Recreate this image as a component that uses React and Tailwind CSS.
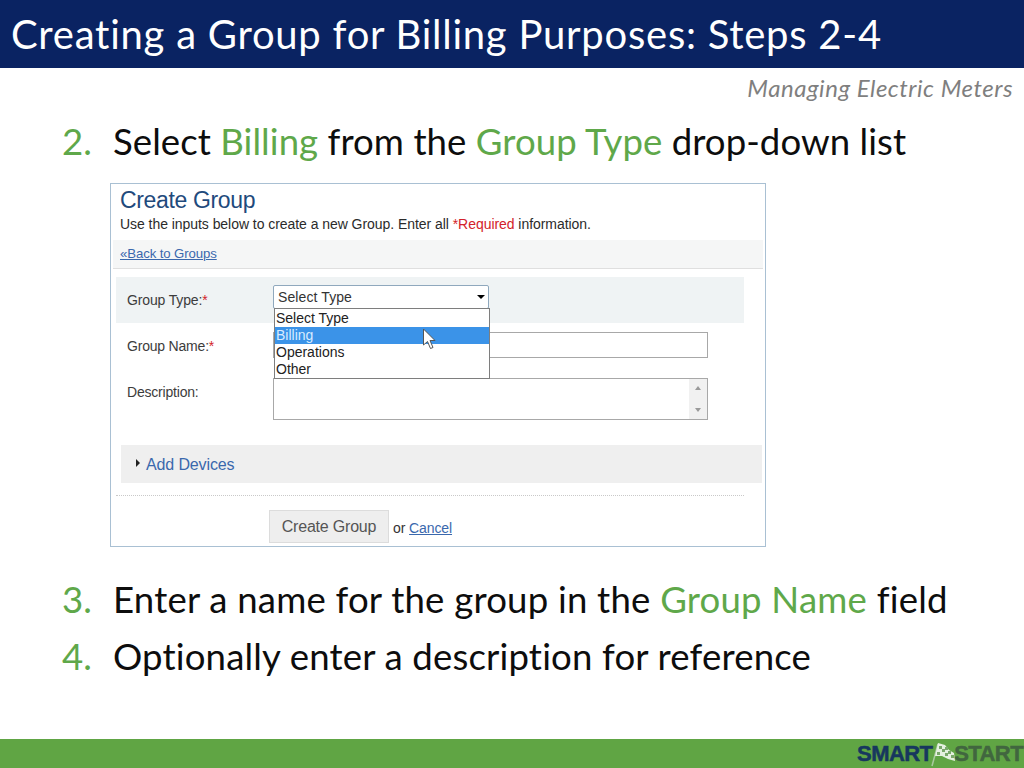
const sans = "font-['Liberation_Sans',Arial,sans-serif]";

function Step({ n, children, className = "" }) {
  return (
    <div className={`flex items-baseline text-[36.6px] leading-[44px] text-[#0d0d0d] ${className}`}>
      <span className="w-[51px] shrink-0 text-[#5fa84a] tracking-normal">{n}.</span>
      <span className="whitespace-nowrap">{children}</span>
    </div>
  );
}

const G = ({ children }) => <span className="text-[#5fa84a]">{children}</span>;
const Req = () => <span className="text-[#d3222a]">*</span>;

function Panel() {
  return (
    <div className={`${sans} ml-[110px] mt-[20px] h-[364px] w-[656px] border border-[#a9c0d3] bg-white flex flex-col`}>
      <div className="h-[56px] px-[9px] pt-[3px] shrink-0">
        <div className="text-[23px] leading-[27px] tracking-[-0.35px] text-[#1f4a7c]">Create Group</div>
        <div className="text-[14px] leading-[18px] tracking-[-0.05px] text-[#2b2b2b] mt-[1px]">
          Use the inputs below to create a new Group. Enter all <span className="text-[#d3222a]">*Required</span> information.
        </div>
      </div>
      <div className="h-[29px] shrink-0 mx-[2px] bg-[#f5f6f6] border-b border-[#dfdfdf] px-[7px] flex items-center text-[13.2px] tracking-[-0.1px] text-[#3a68ad] underline">
        «Back to Groups
      </div>
      <div className="relative flex-1 flex flex-col">
        <div className="mt-[8px] mx-[5px] h-[46px] w-[628px] shrink-0 bg-[#eff3f4] flex items-start pl-[11px] text-[14px] text-[#3c3c3c]">
          <div className="w-[146px] pt-[13px] tracking-[-0.15px]">Group Type:<Req /></div>
          <div className="mt-[8px] h-[24px] w-[216px] border border-[#8fa8bd] rounded-[2px] bg-white flex items-center justify-between pl-[4px] pr-[3px] text-[#333] tracking-[0.1px]">
            <span>Select Type</span>
            <span className="w-0 h-0 border-x-[4px] border-x-transparent border-t-[4px] border-t-black" />
          </div>
        </div>
        <div className="mx-[5px] pl-[11px] h-[46px] shrink-0 flex items-start text-[14px] text-[#3c3c3c]">
          <div className="w-[146px] pt-[13px] tracking-[-0.2px]">Group Name:<Req /></div>
          <div className="mt-[9px] h-[26px] w-[435px] border border-[#a8a8a8] bg-white" />
        </div>
        <div className="mx-[5px] pl-[11px] h-[56px] shrink-0 flex items-start text-[14px] text-[#3c3c3c]">
          <div className="w-[146px] pt-[13px] tracking-[-0.2px]">Description:</div>
          <div className="mt-[9px] h-[42px] w-[435px] border border-[#a8a8a8] bg-white flex justify-end">
            <div className="w-[18px] bg-[#f1f1f1] flex flex-col items-center justify-between py-[7px]">
              <span className="w-0 h-0 border-x-[3px] border-x-transparent border-b-[4px] border-b-[#9a9a9a]" />
              <span className="w-0 h-0 border-x-[3px] border-x-transparent border-t-[4px] border-t-[#9a9a9a]" />
            </div>
          </div>
        </div>
        <div className="mt-[20px] mx-[10px] h-[38px] w-[641px] shrink-0 bg-[#efefef] flex items-center pl-[15px] pt-[1px]">
          <span className="w-0 h-0 border-y-[4px] border-y-transparent border-l-[4px] border-l-[#222] mr-[6px] -mt-[3px]" />
          <span className="text-[16px] tracking-[-0.13px] text-[#3a68ad]">Add Devices</span>
        </div>
        <div className="mt-[12px] mx-[5px] w-[628px] shrink-0 border-t border-dotted border-[#c9c9c9]" />
        <div className="flex items-start pl-[158px] mt-[14px]">
          <div className="h-[33px] w-[120px] border border-[#dcdcdc] bg-[#eeeeee] flex items-center justify-center text-[16px] tracking-[-0.2px] text-[#555]">
            Create Group
          </div>
          <div className="ml-[4px] mt-[9px] text-[14px] leading-[18px] tracking-[-0.1px] text-[#333]">
            or <span className="text-[#3a68ad] underline">Cancel</span>
          </div>
        </div>

        <div className="absolute left-[163px] top-[39px] w-[216px] h-[71px] border border-[#7e7e7e] bg-white text-[14px] leading-[17px] text-[#222] pt-[1px]">
          <div className="pl-[1px] h-[17px]">Select Type</div>
          <div className="relative pl-[1px] h-[17px] bg-[#3b93e8] text-[#d8ecff]">
            Billing
            <svg className="absolute left-[147px] top-[1px]" width="16" height="24" viewBox="0 0 16 24">
              <path d="M1.5 1 L1.5 17 L5.5 13.5 L8.5 20.5 L11 19.5 L8 12.5 L13 12.5 Z" fill="#fff" stroke="#555" strokeWidth="1" />
            </svg>
          </div>
          <div className="pl-[1px] h-[17px]">Operations</div>
          <div className="pl-[1px] h-[17px]">Other</div>
        </div>
      </div>
    </div>
  );
}

export default function App() {
  return (
    <div className="w-[1024px] h-[768px] overflow-hidden bg-white flex flex-col font-['Lato',sans-serif] [font-variant-ligatures:none]">
      <div className="h-[68px] shrink-0 bg-[#0a2362] flex items-center pl-[11px] text-white text-[40px] tracking-[0.75px] whitespace-nowrap">
        Creating a Group for Billing Purposes: Steps 2-4
      </div>
      <div className="h-[39px] shrink-0 flex items-center justify-end pr-[11px] text-[24px] tracking-[0.52px] italic text-[#7f7f7f]">
        Managing Electric Meters
      </div>
      <div className="pl-[62px] mt-[12px]">
        <Step n="2" className="tracking-[0.05px]">Select <G>Billing</G> from the <G>Group Type</G> drop-down list</Step>
      </div>
      <Panel />
      <div className="pl-[62px] mt-[30px] flex flex-col gap-[13px]">
        <Step n="3" className="tracking-[0.2px]">Enter a name for the group in the <G>Group Name</G> field</Step>
        <Step n="4" className="tracking-[0.16px]">Optionally enter a description for reference</Step>
      </div>
      <div className="mt-auto h-[29px] shrink-0 bg-[#60a544] flex items-center justify-end">
        <div className={`${sans} flex items-center text-[22px] font-bold tracking-[-0.6px] pr-[1px] [-webkit-text-stroke:0.5px]`}>
          <span className="text-[#17375e]">SMART</span>
          <svg width="24" height="26" viewBox="0 0 24 26" className="-mx-[1px]">
            <path d="M1 25 L7 3" stroke="#a9c9a0" strokeWidth="1.5" />
            <path d="M7 2 L14 4 L18 9 L23 12 L24 20 L17 18 L11 15 L4 15 Z" fill="#e4f0df" />
            <path d="M8 5h3v3H8zM14 6h3v3h-3zM11 8h3v3h-3zM17 10h3v3h-3zM6 11h3v3H6zM14 12h3v3h-3zM20 14h3v3h-3z" fill="#79a86a" />
          </svg>
          <span className="text-[#41663f]">START</span>
        </div>
      </div>
    </div>
  );
}
